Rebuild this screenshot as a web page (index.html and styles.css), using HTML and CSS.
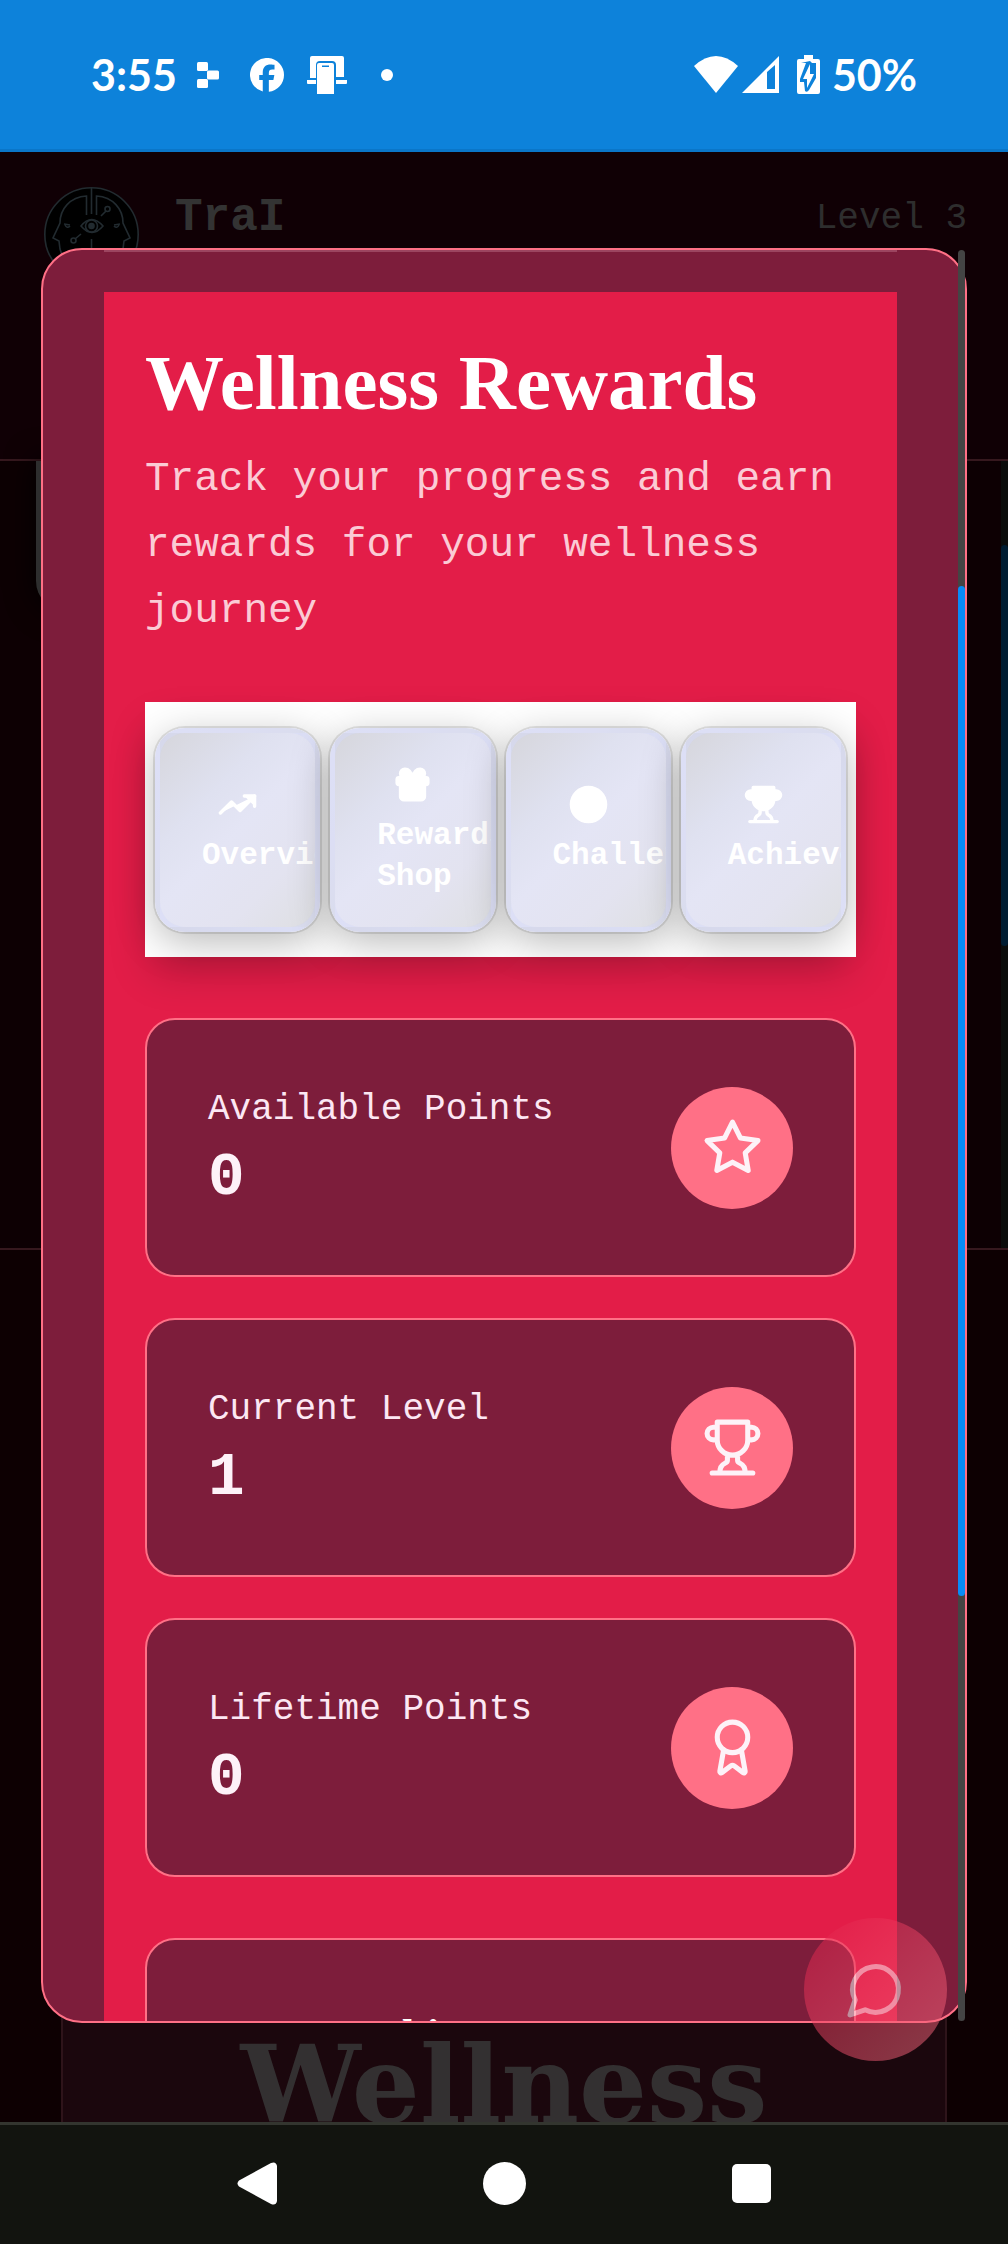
FILE: index.html
```html
<!DOCTYPE html>
<html lang="en">
<head>
<meta charset="utf-8">
<meta name="viewport" content="width=device-width, initial-scale=1">
<title>Wellness Rewards</title>
<link rel="stylesheet" href="styles.css">
</head>
<body>
<header class="status">
  <div class="status-group status-left">
    <span class="status-text">3:55</span>
    <svg class="i-blocks" viewBox="0 0 22 26" fill="#fff"><rect width="11" height="9" rx="1.5"/><rect x="10" y="8.500" width="12" height="9" rx="1.500"/><rect y="17" width="11" height="9" rx="1.500"/></svg>
    <svg class="i-fb" viewBox="0 0 24 24" fill="#fff"><path d="M24 12a12 12 0 1 0-15 11.600V15.600H6.500V12H9v-1.600C9 6.300 11 4.500 14.700 4.500c.9 0 2 .2 2.600.3v3.300h-1.500c-1.900 0-2.500.7-2.500 2.500V12h3.900l-.7 3.600h-3.200v8.300A12 12 0 0 0 24 12z"/></svg>
    <svg class="i-cast" viewBox="0 0 40 38" fill="#fff"><path d="M3 21V2q0-2 2-2h30q2 0 2 2v19h-8V9q0-4-4-4H13q-4 0-4 4v13H3zM0 24h9v4H1q-1 0-1-1zM29 24h11v3q0 1-1 1H29z"/><path fill-rule="evenodd" d="M12 7h13q2 0 2 2v29H10V9q0-2 2-2zm3 2.500v1.500h7V9.500z"/></svg>
    <span class="dot"></span>
  </div>
  <div class="status-group status-right">
    <svg class="i-wifi" viewBox="0 0 44 37" fill="#fff"><path d="M0 10Q22-10 44 10L22 37z"/></svg>
    <svg class="i-cell" viewBox="0 0 37 37"><path fill="#fff" fill-rule="evenodd" d="M37 0v37H0zM25 16v17h8V9z"/></svg>
    <svg class="i-batt" viewBox="0 0 23 39"><path fill="#fff" d="M7 0h9v4h5q2 0 2 2v31q0 2-2 2H2q-2 0-2-2V6q0-2 2-2h5z"/><path fill="#0d82da" d="M4 8h5L3 24v3h4l1 9q2 2 4-1l7-12V8h-4L13 6z"/><path fill="#fff" d="M13 9 6 24h4v9l7-14h-4z"/></svg>
    <span class="status-text">50%</span>
  </div>
</header>

<main class="screen">
  <div class="page" aria-hidden="true">
    <div class="page-head">
      <svg class="logo" viewBox="0 0 95 95" fill="none" stroke="#222b30" stroke-width="1.600">
        <circle cx="47.500" cy="47.500" r="46.700" fill="#000"/>
        <path d="M42.500 28V9C26 10 16 22 16 36L9 51l6 3 1 8 2 6M52.500 28V9C69 10 79 22 79 36l7 15-6 3-1 8-2 6M47.500 0v27M47.500 52v20M37 39q10.500-13 22 0-11 13-22 0zM37 47l-6 5M57 29l5-5M20 37l6 1M70 38l6-1"/>
        <circle cx="47.500" cy="39" r="6"/><circle cx="47.500" cy="39" r="2.500" fill="#222b30"/><circle cx="29.500" cy="53.500" r="2.500"/><circle cx="63.500" cy="22" r="2.500"/>
        <path d="M21 38q2 4 5 1M70 39q3 3 5-1"/>
      </svg>
      <span class="brand">TraI</span>
      <span class="level">Level 3</span>
    </div>
    <div class="page-mid">
      <div class="page-tile"></div>
      <div class="page-scroll"><div class="page-thumb"></div></div>
    </div>
    <div class="page-foot"><div class="hero">Wellness</div></div>
  </div>

  <section class="dialog" role="dialog" aria-labelledby="title">
    <div class="dialog-box">
      <div class="edge"></div>
      <div class="panel">
        <h1 class="title" id="title">Wellness Rewards</h1>
        <p class="lead">Track your progress and earn rewards for your wellness journey</p>

        <div class="tabs" role="tablist">
          <button class="tab" role="tab" aria-selected="true">
            <svg class="tab-icon" viewBox="0 0 24 24"><polyline points="22 7 13.500 15.500 8.500 10.500 2 17"/><polyline points="16 7 22 7 22 13"/></svg>
            <span>Overview</span>
          </button>
          <button class="tab" role="tab">
            <svg class="tab-icon" viewBox="0 0 24 24"><rect x="3" y="8" width="18" height="4" rx="1"/><path d="M12 8v13M19 12v7a2 2 0 0 1-2 2H7a2 2 0 0 1-2-2v-7M7.500 8a2.500 2.500 0 0 1 0-5A4.800 8 0 0 1 12 8a4.800 8 0 0 1 4.500-5 2.500 2.500 0 0 1 0 5"/></svg>
            <span>Rewards Shop</span>
          </button>
          <button class="tab" role="tab">
            <svg class="tab-icon" viewBox="0 0 24 24"><circle cx="12" cy="12" r="10"/></svg>
            <span>Challenges</span>
          </button>
          <button class="tab" role="tab">
            <svg class="tab-icon" viewBox="0 0 24 24"><path d="M6 9H4.500a2.500 2.500 0 0 1 0-5H6M18 9h1.500a2.500 2.500 0 0 0 0-5H18M4 22h16M10 14.660V17c0 .55-.47.98-.97 1.210C7.850 18.750 7 20.240 7 22M14 14.660V17c0 .55.47.98.97 1.210C16.150 18.750 17 20.240 17 22M18 2H6v7a6 6 0 0 0 12 0V2Z"/></svg>
            <span>Achievements</span>
          </button>
        </div>

        <div class="stats">
          <article class="card stat">
            <div class="stat-text"><div class="stat-label">Available Points</div><div class="stat-value">0</div></div>
            <div class="badge"><svg class="icon" viewBox="0 0 24 24"><polygon points="12 2 15.090 8.260 22 9.270 17 14.140 18.180 21.020 12 17.770 5.820 21.020 7 14.140 2 9.270 8.910 8.260 12 2"/></svg></div>
          </article>
          <article class="card stat">
            <div class="stat-text"><div class="stat-label">Current Level</div><div class="stat-value">1</div></div>
            <div class="badge"><svg class="icon" viewBox="0 0 24 24"><path d="M6 9H4.500a2.500 2.500 0 0 1 0-5H6M18 9h1.500a2.500 2.500 0 0 0 0-5H18M4 22h16M10 14.660V17c0 .55-.47.98-.97 1.210C7.850 18.750 7 20.240 7 22M14 14.660V17c0 .55.47.98.97 1.210C16.150 18.750 17 20.240 17 22M18 2H6v7a6 6 0 0 0 12 0V2Z"/></svg></div>
          </article>
          <article class="card stat">
            <div class="stat-text"><div class="stat-label">Lifetime Points</div><div class="stat-value">0</div></div>
            <div class="badge"><svg class="icon" viewBox="0 0 24 24"><circle cx="12" cy="8" r="6"/><path d="m15.477 12.890 1.515 8.526a.5.5 0 0 1-.81.47l-3.580-2.687a1 1 0 0 0-1.197 0l-3.586 2.686a.5.5 0 0 1-.81-.469l1.514-8.526"/></svg></div>
          </article>
        </div>

        <article class="card recent">
          <h2 class="recent-title">Recent Achievements</h2>
        </article>
      </div>
    </div>
    <div class="scroll"><div class="thumb"></div></div>
  </section>

  <button class="fab" aria-label="Open chat">
    <svg class="icon" viewBox="0 0 24 24"><path d="M7.900 20A9 9 0 1 0 4 16.100L2 22Z"/></svg>
  </button>
</main>

<nav class="nav" aria-label="System">
  <button class="nav-btn" aria-label="Back"><svg viewBox="0 0 43 43" fill="#fff"><path d="M3 18.500 35 1q5-2 6 3v35q-1 5-6 3L3 24.500q-3-3 0-6z"/></svg></button>
  <button class="nav-btn" aria-label="Home"><svg viewBox="0 0 43 43" fill="#fff"><circle cx="21.500" cy="21.500" r="21.500"/></svg></button>
  <button class="nav-btn" aria-label="Recent apps"><svg viewBox="0 0 43 43" fill="#fff"><rect x="2" y="2" width="39" height="39" rx="5"/></svg></button>
</nav>
</body>
</html>
```
FILE: styles.css
```css
* { box-sizing: border-box; }

:root {
  --mono: "Liberation Mono", monospace;
  --serif: "Liberation Serif", serif;
  --rose: #e31d48;
  --wine: #7d1d3b;
  --pink: #ff7086;
  --blush: #fdf2f8;
}

body {
  margin: 0;
  height: 100vh;
  display: flex;
  flex-direction: column;
  overflow: hidden;
  background: #0d0002;
  font-family: var(--mono);
}

button {
  padding: 0;
  border: 0;
  background: none;
  font: inherit;
  color: inherit;
}

svg { display: block; flex: none; }

/* system status bar */
.status {
  flex: none;
  height: 152px;
  padding: 0 91px;
  display: flex;
  justify-content: space-between;
  align-items: center;
  background: #0d82da;
  border-bottom: 3px solid #0a76c8;
}
.status-group { display: flex; align-items: center; }
.status-text {
  font: 700 43px/43px Lato, sans-serif;
  color: #fff;
}
.i-blocks { width: 22px; height: 26px; margin: 0 31px 0 20px; }
.i-fb { width: 34px; height: 34px; margin-right: 23px; }
.i-cast { width: 40px; height: 38px; margin-right: 34px; }
.dot { width: 12px; height: 12px; border-radius: 50%; background: #fff; }
.i-wifi { width: 44px; height: 37px; margin-right: 4px; }
.i-cell { width: 37px; height: 37px; margin-right: 18px; }
.i-batt { width: 23px; height: 39px; margin-right: 12px; }

/* dimmed page under the dialog */
.screen {
  flex: 1;
  min-height: 0;
  position: relative;
  overflow: hidden;
}
.page { height: 100%; display: flex; flex-direction: column; }
.page-head {
  flex: none;
  height: 309px;
  padding: 35px 41px 0 44px;
  display: flex;
  align-items: flex-start;
  background: #100005;
  border-bottom: 2px solid #36181e;
}
.logo { width: 95px; height: 95px; margin-right: 36px; }
.brand { font-size: 46px; line-height: 63px; font-weight: 700; color: #333; }
.level { margin-left: auto; font-size: 36px; line-height: 63px; color: #2e2e2e; }
.page-mid {
  flex: none;
  height: 789px;
  display: flex;
  justify-content: space-between;
  background: #0d0003;
  border-bottom: 2px solid #36181e;
}
.page-tile {
  width: 120px;
  height: 150px;
  margin-left: 36px;
  border-radius: 0 0 0 30px;
  background: #2e2e2e;
  box-shadow: 0 0 30px #000;
}
.page-scroll { width: 7px; background: #0b0c0b; }
.page-thumb { height: 51%; margin-top: 84px; border-radius: 4px; background: #001c31; }
.page-foot { flex: 1; min-height: 0; padding: 0 61px; }
.hero {
  height: 100%;
  padding-top: 753px;
  border: 2px solid #2e141a;
  border-bottom: 0;
  background: #1b070d;
  font: 700 107px/160px "DejaVu Serif", serif;
  text-align: center;
  color: #333031;
}

/* dialog */
.dialog { position: absolute; inset: 96px 41px 99px; }
.dialog-box {
  height: 100%;
  padding: 0 68px 0 61px;
  overflow: hidden;
  border: 2px solid var(--pink);
  border-radius: 41px;
  background: var(--wine);
}
.edge { height: 2px; margin-bottom: 40px; background: #9c4560; }
.panel { padding: 41px; background: var(--rose); }
.title {
  margin: 0 0 14px;
  font: 700 79px/99px var(--serif);
  color: #fff;
  white-space: nowrap;
}
.lead { margin: 0 0 58px; font-size: 41px; line-height: 66px; color: #fbcbd5; }

.scroll {
  position: absolute;
  top: 2px;
  right: 2px;
  bottom: 2px;
  width: 7px;
  border-radius: 4px;
  background: #444;
}
.thumb { height: 57%; border-radius: 4px; background: #078cf7; position: relative; top: 19%; }

/* tabs */
.tabs {
  display: grid;
  grid-template-columns: repeat(4, minmax(0, 1fr));
  gap: 10px;
  height: 255px;
  margin-bottom: 61px;
  padding: 26px 10px 25px;
  background: #fff;
  box-shadow: 0 20px 40px -6px rgba(0, 0, 0, .2);
}
.tab {
  display: flex;
  flex-direction: column;
  align-items: stretch;
  justify-content: center;
  gap: 10px;
  padding: 0 42px;
  overflow: hidden;
  border: 5px solid rgba(214, 218, 248, .5);
  border-radius: 30px;
  background: linear-gradient(135deg, #d6d6dc, #dfe1f0 32%, #e4e5f5 50%, #e3e3f0 75%, #dedfe2);
  box-shadow: 0 0 0 2px rgba(0, 0, 0, .1), 0 10px 40px rgba(0, 0, 0, .28);
  font-size: 31px;
  line-height: 41px;
  font-weight: 700;
  text-align: left;
  color: #fff;
}
.tab-icon {
  align-self: center;
  width: 41px;
  height: 41px;
  fill: #fff;
  stroke: #fff;
  stroke-width: 2;
  stroke-linecap: round;
  stroke-linejoin: round;
}

/* cards */
.stats { display: grid; gap: 41px; margin-bottom: 61px; }
.card {
  border: 2px solid var(--pink);
  border-radius: 30px;
  padding: 61px;
  background: var(--wine);
}
.stat {
  padding: 63px 61px 55px;
  display: flex;
  justify-content: space-between;
  align-items: center;
  color: var(--blush);
}
.stat-label { font-size: 36px; line-height: 53px; color: #fce7f3; }
.stat-value { font-size: 61px; line-height: 84px; font-weight: 700; }
.badge {
  width: 122px;
  height: 122px;
  margin-bottom: 8px;
  display: grid;
  place-items: center;
  border-radius: 50%;
  background: var(--pink);
}
.icon {
  width: 61px;
  height: 61px;
  fill: none;
  stroke: currentColor;
  stroke-width: 2;
  stroke-linecap: round;
  stroke-linejoin: round;
}
.recent { height: 400px; }
.recent-title { margin: 0; font: 700 45px/69px var(--serif); color: #fff; }

/* chat button */
.fab {
  position: absolute;
  right: 61px;
  bottom: 61px;
  width: 143px;
  height: 143px;
  display: grid;
  place-items: center;
  border-radius: 50%;
  background: linear-gradient(135deg, #e11d48, #fb7185);
  opacity: .5;
  color: #fff;
}

/* system navigation bar */
.nav {
  flex: none;
  height: 122px;
  display: flex;
  justify-content: center;
  gap: 204px;
  padding-top: 37px;
  background: #12140f;
  border-top: 3px solid #33352f;
}
.nav-btn { width: 43px; height: 43px; }
```
